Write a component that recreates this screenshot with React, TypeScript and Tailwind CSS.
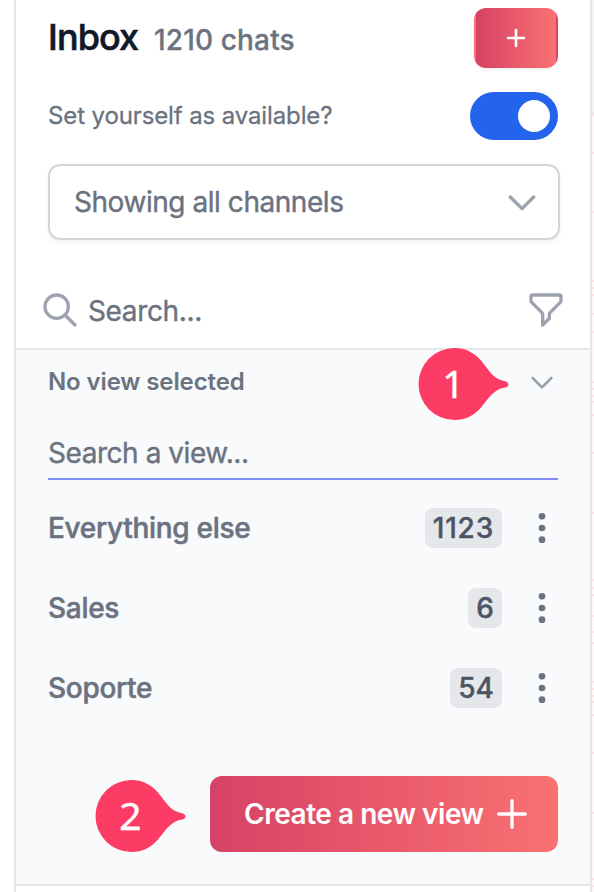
import React from "react";

const views = [
  { name: "Everything else", count: 1123 },
  { name: "Sales", count: 6 },
  { name: "Soporte", count: 54 },
];

// y position of each faint dot along the page edge
const dots = [115, 153, 212, 281, 288, 295, 314, 332, 382, 389, 396, 402, 415, 453, 513, 580, 588, 595, 616, 632, 643, 682, 689, 696, 702, 715, 753, 813, 879, 886];

const Icon = ({ d, className }: { d: string; className: string }) => (
  <svg
    viewBox="0 0 24 24"
    fill="none"
    stroke="currentColor"
    strokeWidth={2}
    strokeLinecap="round"
    strokeLinejoin="round"
    className={`shrink-0 ${className}`}
  >
    <path d={d} />
  </svg>
);

const Marker = ({ label, className }: { label: string; className: string }) => (
  <div className={`absolute h-[72px] w-[92px] text-white ${className}`}>
    <svg viewBox="0 0 92 72" className="absolute inset-0 h-full w-full">
      <path
        fill="#fc3c64"
        d="M36.500 0C49 0 58 6 65 15C73 25.500 77 31.500 87 33.200C91.600 34 91.600 38.800 87 39.600C77 41.300 73 47.300 65 57C58 66 49 72 36.500 72A36 36 0 0 1 36.500 0Z"
      />
    </svg>
    <span className="relative block w-[71px] text-center font-['Noto_Sans'] text-[39px] leading-[70px] [-webkit-text-stroke:0.4px]">
      {label}
    </span>
  </div>
);

const App = () => {
  return (
    <div className="relative flex h-[892px] w-[594px] overflow-hidden bg-white pl-[14px] font-['Inter',sans-serif] text-[#6b7280]">
      <div className="flex w-[578px] shrink-0 flex-col border-x-2 border-[#e5e7eb]">
        <div className="flex h-[348px] flex-col px-8 pt-2">
          <div className="flex h-[60px] items-center justify-between">
            <div className="-mt-0.5 flex items-baseline">
              <h1 className="w-[106px] text-[36px] font-medium tracking-[-0.9px] text-[#111827] [-webkit-text-stroke:0.6px]">
                Inbox
              </h1>
              <span className="text-[28px] font-medium tracking-[0.15px] [-webkit-text-stroke:0.3px]">1210 chats</span>
            </div>
            <button className="flex h-[60px] w-[84px] items-center justify-center rounded-xl border-2 border-transparent bg-linear-to-r/srgb from-[#d64265] to-[#fa7171] text-white shadow-[0_2px_4px_rgba(0,0,0,0.05)]">
              <Icon d="M12 6v12M6 12h12" className="h-8 w-8" />
            </button>
          </div>

          <div className="mt-6 flex h-12 items-center justify-between">
            <span className="text-[24px] tracking-[-0.12px] [-webkit-text-stroke:0.3px]">
              Set yourself as available?
            </span>
            <button className="flex h-12 w-[88px] items-center justify-end rounded-full bg-[#2463eb] p-2">
              <span className="h-8 w-8 rounded-full bg-white" />
            </button>
          </div>

          <button className="mt-6 flex h-[76px] w-[512px] shrink-0 items-center justify-between rounded-xl border-2 border-[#d1d5db] pr-4 pl-6 shadow-[0_2px_4px_rgba(0,0,0,0.05)]">
            <span className="text-[28px] tracking-[-0.45px] [-webkit-text-stroke:0.4px]">Showing all channels</span>
            <Icon d="M19 9l-7 7-7-7" className="h-10 w-10 text-[#9ca3af]" />
          </button>

          <div className="-mx-2 mt-[50px] flex h-10 items-center">
            <Icon
              d="M21 21l-6-6m2-5a7 7 0 11-14 0 7 7 0 0114 0z"
              className="h-10 w-10 text-[#9ca3af]"
            />
            <span className="mt-0.5 ml-2 text-[28px] tracking-[-0.35px] [-webkit-text-stroke:0.4px]">Search...</span>
            <Icon
              d="M3 4a1 1 0 011-1h16a1 1 0 011 1v2.586a1 1 0 01-.293.707l-6.414 6.414a1 1 0 00-.293.707V17l-4 4v-6.586a1 1 0 00-.293-.707L3.293 7.293A1 1 0 013 6.586V4z"
              className="ml-auto h-10 w-10 text-[#9ca3af]"
            />
          </div>
        </div>

        <div className="flex h-[538px] flex-col border-y-2 border-[#e5e7eb] bg-[#f9fafb] px-8">
          <div className="flex h-16 items-center justify-between">
            <span className="text-[24px] font-semibold tracking-[-0.12px]">No view selected</span>
            <Icon d="M19 9l-7 7-7-7" className="h-8 w-8 text-[#9ca3af]" />
          </div>
          <div className="flex h-[66px] items-end border-b-2 border-[#818cf8] pb-[4px] text-[28px] tracking-[-0.45px] [-webkit-text-stroke:0.4px]">
            Search a view...
          </div>

          <ul className="mt-2">
            {views.map((view) => (
              <li key={view.name} className="flex h-20 items-center text-[28px] font-medium">
                <span className="tracking-[-0.3px] [-webkit-text-stroke:0.5px]">{view.name}</span>
                <span
                  className={`ml-auto flex h-10 items-center rounded-lg bg-[#e5e7eb] px-2 text-[#4b5563] [-webkit-text-stroke:0.4px] ${
                    view.count > 999 ? "tracking-[0.8px]" : ""
                  }`}
                >
                  {view.count}
                </span>
                <Icon
                  d="M12 5v.01M12 12v.01M12 19v.01M12 6a1 1 0 110-2 1 1 0 010 2zm0 7a1 1 0 110-2 1 1 0 010 2zm0 7a1 1 0 110-2 1 1 0 010 2z"
                  className="-mr-1 ml-5 h-10 w-10"
                />
              </li>
            ))}
          </ul>

          <button className="mt-12 flex h-[76px] w-[348px] items-center justify-between self-end rounded-xl bg-linear-to-r/srgb from-[#d64265] to-[#fa7171] pr-[26px] pl-[34px] text-white">
            <span className="text-[28px] font-semibold tracking-[-0.47px]">Create a new view</span>
            <Icon d="M12 4v16m8-8H4" className="h-10 w-10" />
          </button>
        </div>
      </div>

      <svg viewBox="0 0 2 892" className="h-[892px] w-[2px] shrink-0">
        <rect width="2" height="112" fill="#f5f5f8" />
        <rect y="112" width="2" height="2" fill="#e5e7eb" />
        <rect y="114" width="2" height="778" fill="#fff8f9" />
        {dots.map((y) => (
          <rect key={y} y={y - 1} width="2" height="2" fill="#fde3e8" />
        ))}
      </svg>

      <Marker label="1" className="top-[348px] left-[418px]" />
      <Marker label="2" className="top-[780px] left-[95px]" />
    </div>
  );
};

export default App;
